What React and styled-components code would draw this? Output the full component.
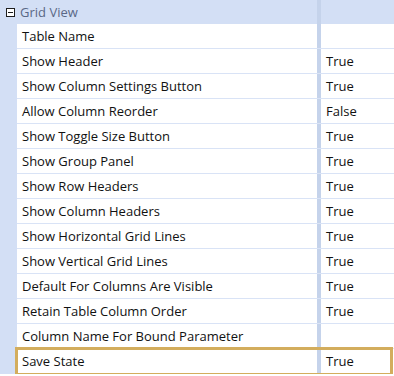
import React from "react";
import styled, { createGlobalStyle } from "styled-components";

const Global = createGlobalStyle`
  html, body { margin: 0; padding: 0; background: #ffffff; }
  body { font-family: "Open Sans", "Noto Sans", sans-serif; }
`;

const Grid = styled.div`
  width: 394px;
  display: flex;
  flex-direction: column;
`;

const HeaderRow = styled.div`
  display: flex;
  height: 24px;
  background: #d3dff5;
`;

const HeaderGutter = styled.div`
  width: 17px;
  display: flex;
  align-items: center;
  justify-content: flex-start;
  padding-left: 6px;
  box-sizing: border-box;
`;

const Collapse = styled.div`
  width: 9px;
  height: 9px;
  box-sizing: border-box;
  border: 1px solid #1e1e1e;
  background: #ffffff;
  display: flex;
  align-items: center;
  justify-content: center;
  &::before {
    content: "";
    width: 5px;
    height: 1px;
    background: #1e1e1e;
  }
`;

const HeaderBody = styled.div`
  flex: 1;
  display: grid;
  grid-template-columns: 300px 4px 1fr;
`;

const HeaderTitle = styled.div`
  padding-left: 3px;
  display: flex;
  align-items: center;
  font-size: 13px;
  color: #5a6886;
`;

const Divider = styled.div`
  background: #c5d3eb;
`;

const Row = styled.div`
  display: flex;
  height: 25px;
`;

const Gutter = styled.div`
  width: 17px;
  background: #d3dff5;
`;

const RowBody = styled.div`
  flex: 1;
  display: grid;
  grid-template-columns: 300px 4px 1fr;
  background: #ffffff;
  border-bottom: 1px solid ${(p) => (p.$selected ? "transparent" : "#d9e3f6")};
  outline: ${(p) => (p.$selected ? "3px solid #d3ad5d" : "none")};
  outline-offset: -1px;
  margin-right: ${(p) => (p.$selected ? "3px" : "0")};
  position: relative;
  z-index: ${(p) => (p.$selected ? 1 : 0)};
`;

const Cell = styled.div`
  display: flex;
  align-items: center;
  padding-left: ${(p) => p.$pad || "5px"};
  font-size: 13px;
  color: #111111;
  white-space: nowrap;
  overflow: hidden;
`;

const rows = [
  ["Table Name", ""],
  ["Show Header", "True"],
  ["Show Column Settings Button", "True"],
  ["Allow Column Reorder", "False"],
  ["Show Toggle Size Button", "True"],
  ["Show Group Panel", "True"],
  ["Show Row Headers", "True"],
  ["Show Column Headers", "True"],
  ["Show Horizontal Grid Lines", "True"],
  ["Show Vertical Grid Lines", "True"],
  ["Default For Columns Are Visible", "True"],
  ["Retain Table Column Order", "True"],
  ["Column Name For Bound Parameter", ""],
  ["Save State", "True"],
];

export default function App() {
  return (
    <>
      <Global />
      <Grid>
        <HeaderRow>
          <HeaderGutter>
            <Collapse />
          </HeaderGutter>
          <HeaderBody>
            <HeaderTitle>Grid View</HeaderTitle>
            <Divider />
            <div />
          </HeaderBody>
        </HeaderRow>
        {rows.map(([name, value], i) => (
          <Row key={name}>
            <Gutter />
            <RowBody $selected={i === rows.length - 1}>
              <Cell>{name}</Cell>
              <Divider />
              <Cell>{value}</Cell>
            </RowBody>
          </Row>
        ))}
      </Grid>
    </>
  );
}
